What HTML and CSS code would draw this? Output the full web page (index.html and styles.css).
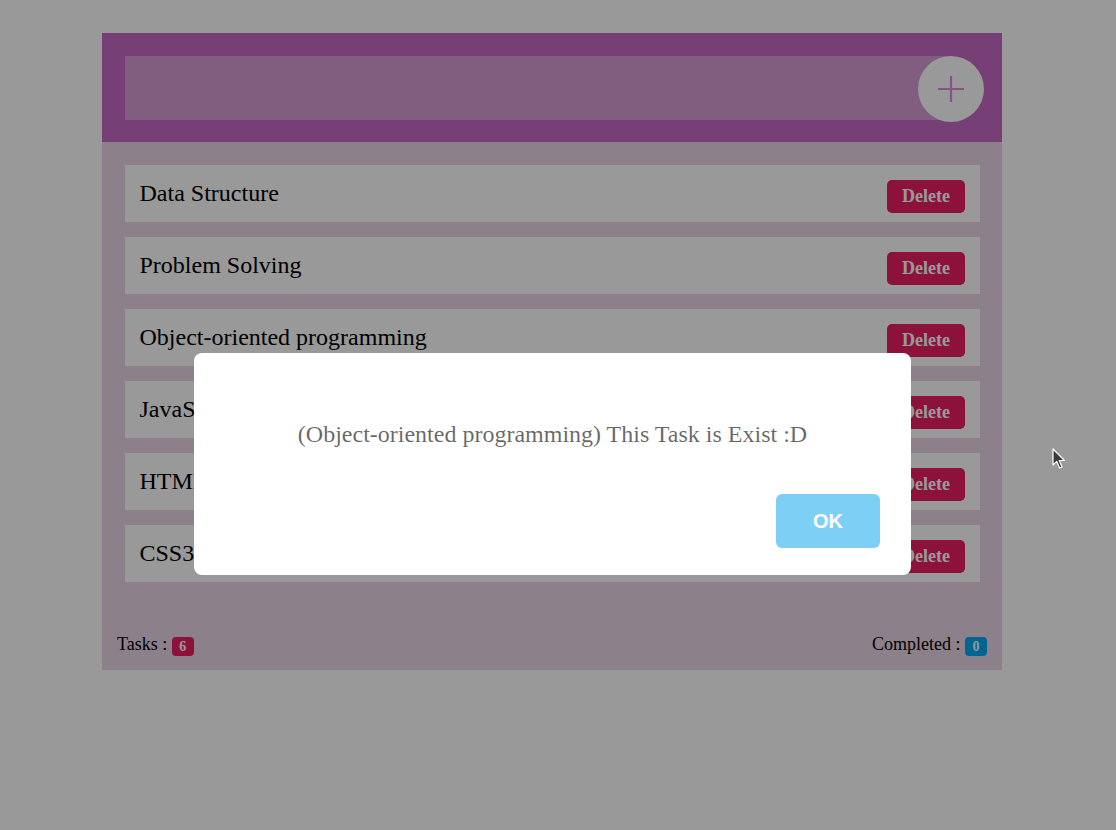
FILE: index.html
```html
<!DOCTYPE html>
<html>
<head>
<meta charset="utf-8">
<link rel="stylesheet" href="styles.css">
</head>
<body>
<div class="app">
  <div class="header">
    <input class="task-input" type="text">
    <button class="add-btn" aria-label="Add">
      <svg width="28" height="28" viewBox="0 0 28 28"><path d="M14 1V27M1 14H27" stroke="#e08ae0" stroke-width="2.2" fill="none"/></svg>
    </button>
  </div>
  <div class="main">
    <div class="tasks">
      <div class="task"><span class="task-name">Data Structure</span><button class="del">Delete</button></div>
      <div class="task"><span class="task-name">Problem Solving</span><button class="del">Delete</button></div>
      <div class="task"><span class="task-name">Object-oriented programming</span><button class="del">Delete</button></div>
      <div class="task"><span class="task-name">JavaScript</span><button class="del">Delete</button></div>
      <div class="task"><span class="task-name">HTML5</span><button class="del">Delete</button></div>
      <div class="task"><span class="task-name">CSS3</span><button class="del">Delete</button></div>
    </div>
    <div class="stats">
      <div class="stat">Tasks : <span class="badge badge-red">6</span></div>
      <div class="stat">Completed : <span class="badge badge-blue">0</span></div>
    </div>
  </div>
</div>

<div class="overlay">
  <div class="modal">
    <div class="modal-text">(Object-oriented programming) This Task is Exist :D</div>
    <div class="modal-footer"><button class="ok-btn">OK</button></div>
  </div>
  <svg class="cursor" width="14" height="22" viewBox="0 0 14 22"><path d="M1 1V17L4.8 13.4L7.6 20L10 19L7.3 12.5H12.5Z" fill="#3a3a3a" stroke="#fff" stroke-width="1.2" stroke-linejoin="round"/></svg>
</div>
</body>
</html>
```

FILE: styles.css
```css
html, body {
  margin: 0;
  padding: 0;
  background: #ffffff;
  font-family: "Liberation Serif", "Times New Roman", serif;
}

.app {
  width: 900px;
  margin: 33px 0 0 102px;
}

.header {
  background: #c569c5;
  padding: 23px 18px 20px 23px;
  display: flex;
  align-items: flex-start;
}

.task-input {
  flex: 1;
  height: 64px;
  border: none;
  outline: none;
  background: #d79dd4;
  margin: 0 -33px 0 0;
  padding: 0;
}

.add-btn {
  position: relative;
  width: 66px;
  height: 66px;
  border-radius: 50%;
  border: none;
  background: #ffffff;
  margin: 0;
  padding: 0;
  display: flex;
  align-items: center;
  justify-content: center;
}

.main {
  background: #e9d7e6;
}

.tasks {
  padding: 23px 22px 0 23px;
  display: flex;
  flex-direction: column;
  gap: 15px;
}

.task {
  background: #ffffff;
  height: 57px;
  display: flex;
  align-items: center;
  justify-content: space-between;
  padding: 0 15px 0 14.5px;
}

.task-name {
  font-size: 24px;
  color: #000;
  margin-top: -1px;
}

.del {
  width: 78px;
  height: 33px;
  margin-top: 6px;
  border: none;
  border-radius: 5px;
  background: #e91e63;
  color: #ffffff;
  font-family: "Liberation Serif", serif;
  font-weight: bold;
  font-size: 18px;
  padding: 0;
}

.stats {
  display: flex;
  justify-content: space-between;
  padding: 51px 15px 14px;
  font-size: 18px;
  line-height: 22px;
  color: #000;
}

.badge {
  display: inline-block;
  min-width: 22px;
  height: 19px;
  line-height: 19px;
  border-radius: 4px;
  text-align: center;
  color: #fff;
  font-weight: bold;
  font-size: 14px;
  vertical-align: -1px;
}

.badge-red { background: #e91e63; }
.badge-blue { background: #03a9f4; }

.overlay {
  position: fixed;
  inset: 0;
  background: rgba(0, 0, 0, 0.4);
}

.modal {
  position: absolute;
  left: 194px;
  top: 353px;
  width: 717px;
  box-sizing: border-box;
  background: #fff;
  border-radius: 8px;
  padding: 0 31px 27px;
}

.modal-text {
  margin-top: 67px;
  font-size: 24px;
  line-height: 28px;
  text-align: center;
  color: rgba(0, 0, 0, 0.6);
}

.modal-footer {
  margin-top: 46px;
  display: flex;
  justify-content: flex-end;
}

.ok-btn {
  width: 104px;
  height: 54px;
  border: none;
  border-radius: 6px;
  background: #7ecff6;
  color: #fff;
  font-family: "Liberation Sans", Arial, sans-serif;
  font-weight: bold;
  font-size: 20px;
  padding: 0;
}

.cursor {
  position: absolute;
  left: 1052px;
  top: 448px;
}
```
